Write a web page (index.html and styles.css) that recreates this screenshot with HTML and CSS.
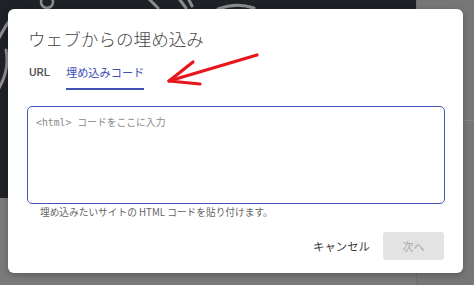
FILE: index.html
```html
<!DOCTYPE html>
<html lang="ja">
<head>
<meta charset="utf-8">
<title>ウェブからの埋め込み</title>
<link rel="stylesheet" href="styles.css">
</head>
<body>
<div class="backdrop">
  <div class="dark-panel">
    <svg class="deco" width="416" height="198" viewBox="0 0 416 198" fill="none" stroke="#8a8c8e" stroke-width="3" stroke-linecap="round">
      <path d="M-2 90 Q10 70 6 50"/>
      <path d="M-2 40 Q4 28 10 20"/>
      <circle cx="47" cy="2" r="6" stroke-width="2.5"/>
      <path d="M148 -2 L158 8"/>
      <path d="M180 0 L186 8"/>
      <path d="M188 -2 L192 6"/>
      <path d="M218 9 Q236 2 254 8"/>
    </svg>
  </div>
  <div class="side-panel"></div>
</div>

<div class="dialog">
  <h1 class="title">ウェブからの埋め込み</h1>
  <div class="tabs">
    <div class="tab">URL</div>
    <div class="tab active">埋め込みコード</div>
  </div>
  <textarea class="code" placeholder="&lt;html&gt; コードをここに入力"></textarea>
  <div class="hint">埋め込みたいサイトの HTML コードを貼り付けます。</div>
  <div class="actions">
    <button class="btn cancel">キャンセル</button>
    <button class="btn next" disabled>次へ</button>
  </div>
</div>

<svg class="arrow" width="474" height="285" viewBox="0 0 474 285" fill="none" stroke="#e8151d" stroke-width="3.2" stroke-linecap="round" stroke-linejoin="round">
  <path d="M257 55 L169 81"/>
  <path d="M193 62 L169 81 L200 84"/>
</svg>
</body>
</html>
```
FILE: styles.css
```css
html, body {
  margin: 0;
  padding: 0;
}
body {
  width: 474px;
  height: 285px;
  overflow: hidden;
  position: relative;
  background: #7a7a7a;
  font-family: "Noto Sans CJK JP", "Noto Sans", sans-serif;
}
.backdrop {
  display: flex;
  height: 285px;
}
.dark-panel {
  width: 416px;
  height: 198px;
  background: #1e2226;
  flex: none;
}
.deco {
  display: block;
}
.side-panel {
  flex: 1;
  border-left: 1px solid #6e6e6e;
  background: #777;
  background-image: linear-gradient(#858585, #858585);
  background-size: 100% 1px;
  background-position: 0 120px;
  background-repeat: no-repeat;
}
.dialog {
  position: absolute;
  left: 8px;
  top: 9px;
  width: 455px;
  height: 264px;
  box-sizing: border-box;
  padding: 18px 18px 0 19px;
  background: #fff;
  border-radius: 6px;
  box-shadow: 0 2px 6px rgba(0, 0, 0, 0.25);
  display: flex;
  flex-direction: column;
}
.title {
  margin: 0 0 0 1px;
  font-size: 17.6px;
  line-height: 24px;
  font-weight: 300;
  color: #474747;
  letter-spacing: 0;
}
.tabs {
  display: flex;
  margin-top: 13px;
  gap: 16px;
  padding-left: 2px;
}
.tab {
  font-size: 11.2px;
  line-height: 16px;
  padding-bottom: 8px;
  border-bottom: 2px solid transparent;
  color: #5a5a5a;
  font-weight: 500;
}
.tab:first-child {
  font-family: Roboto, "Noto Sans", sans-serif;
  font-size: 11.5px;
  color: #555;
}
.tab.active {
  color: #3f51b5;
  font-weight: 400;
  border-bottom-color: #3f51b5;
  padding: 0 0 8px 0;
}
.code {
  margin-top: 16px;
  height: 98px;
  width: 100%;
  box-sizing: border-box;
  border: 1.5px solid #4355bb;
  border-radius: 5px;
  padding: 9px 8px;
  resize: none;
  outline: none;
  font-family: "DejaVu Sans Mono", "Noto Sans CJK JP", monospace;
  font-size: 9.8px;
  line-height: 14px;
  color: #333;
}
.code::placeholder {
  color: #8a8a8a;
  font-family: "DejaVu Sans Mono", "Noto Sans CJK JP", monospace;
}
.hint {
  margin-top: 1px;
  padding-left: 13px;
  font-size: 9.7px;
  line-height: 14px;
  color: #646464;
}
.actions {
  display: flex;
  justify-content: flex-end;
  align-items: center;
  margin-top: 13px;
  gap: 5px;
  padding-right: 1px;
}
.btn {
  font-family: "Noto Sans CJK JP", "Noto Sans", sans-serif;
  border: none;
  background: transparent;
  height: 28px;
  border-radius: 3px;
  font-size: 11.4px;
  padding: 0 8px;
}
.cancel {
  color: #3a3a3a;
}
.next {
  width: 61px;
  background: #e3e3e3;
  color: #a8a8a8;
  font-size: 11px;
}
.arrow {
  position: absolute;
  left: 0;
  top: 0;
  pointer-events: none;
}
```
